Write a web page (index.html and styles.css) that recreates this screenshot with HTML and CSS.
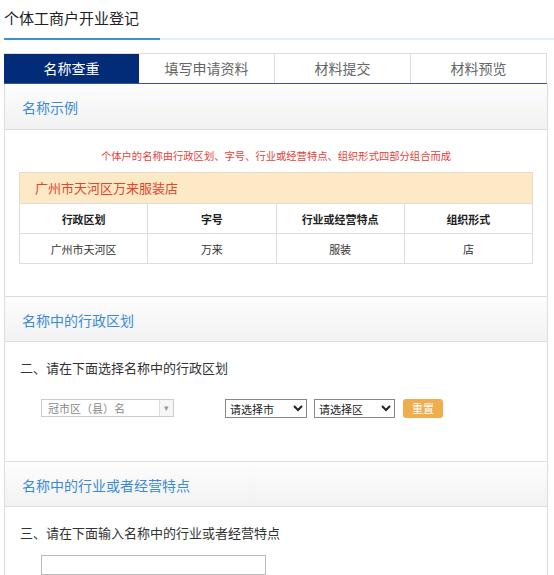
FILE: index.html
```html
<!DOCTYPE html>
<html lang="zh">
<head>
<meta charset="utf-8">
<title>个体工商户开业登记</title>
<link rel="stylesheet" href="styles.css">
</head>
<body>
<div class="page">
  <div class="title-bar">
    <h1 class="title">个体工商户开业登记</h1>
  </div>
  <div class="tabs">
    <div class="tab active">名称查重</div>
    <div class="tab">填写申请资料</div>
    <div class="tab">材料提交</div>
    <div class="tab">材料预览</div>
  </div>
  <div class="panel">
    <div class="sec-head">名称示例</div>
    <div class="sec-body example">
      <p class="note">个体户的名称由行政区划、字号、行业或经营特点、组织形式四部分组合而成</p>
      <div class="sample">广州市天河区万来服装店</div>
      <table class="tbl">
        <tr><th>行政区划</th><th>字号</th><th>行业或经营特点</th><th>组织形式</th></tr>
        <tr><td>广州市天河区</td><td>万来</td><td>服装</td><td>店</td></tr>
      </table>
    </div>
    <div class="sec-head bordered">名称中的行政区划</div>
    <div class="sec-body region">
      <p class="q">二、请在下面选择名称中的行政区划</p>
      <div class="controls">
        <div class="combo"><span class="combo-text">冠市区（县）名</span><span class="combo-arrow">▾</span></div>
        <select class="sel sel-city"><option>请选择市</option></select>
        <select class="sel sel-area"><option>请选择区</option></select>
        <button class="btn">重置</button>
      </div>
    </div>
    <div class="sec-head bordered">名称中的行业或者经营特点</div>
    <div class="sec-body industry">
      <p class="q">三、请在下面输入名称中的行业或者经营特点</p>
      <input class="txt" type="text">
    </div>
  </div>
</div>
</body>
</html>
```
FILE: styles.css
```css
* { box-sizing: border-box; }
html, body { margin: 0; padding: 0; background: #fff; }
body {
  font-family: "Microsoft YaHei", "Noto Sans CJK SC", "Liberation Sans", sans-serif;
  color: #333;
}
.page { padding: 0 0 0 4px; width: 554px; }
.title-bar {
  height: 40px;
  border-bottom: 2px solid #e6eef6;
}
.title {
  margin: 0;
  display: inline-block;
  font-size: 15px;
  font-weight: normal;
  line-height: 20px;
  padding-top: 8px;
  height: 40px;
  width: 156px;
  border-bottom: 2px solid #3d8fd8;
  color: #222;
}
.tabs {
  margin-top: 13px;
  display: flex;
  width: 543px;
  height: 31px;
  border-top: 1px solid #ddd;
  border-bottom: 1px solid #3a5596;
}
.tab {
  flex: 1;
  text-align: center;
  font-size: 14px;
  line-height: 29px;
  color: #666;
  border-right: 1px solid #ddd;
  background: #fff;
}
.tab.active {
  background: #022b78;
  color: #fff;
  border-right: none;
}
.panel {
  width: 544px;
  border-left: 1px solid #ddd;
  border-right: 1px solid #ddd;
}
.sec-head {
  height: 46px;
  line-height: 46px;
  padding-left: 17px;
  font-size: 14px;
  color: #3a8ad6;
  background: linear-gradient(#fdfdfd, #f2f2f2);
  border-bottom: 1px solid #ddd;
}
.sec-head.bordered { border-top: 1px solid #ddd; }
.sec-body { background: #fff; }
.example { padding: 19px 14px 32px 14px; }
.note {
  margin: 0 0 9px;
  text-align: center;
  font-size: 10.3px;
  line-height: 14px;
  color: #e5413a;
}
.sample {
  height: 31px;
  line-height: 30px;
  padding-left: 15px;
  background: #fde9c5;
  border: 1px solid #e6dcc8;
  border-bottom: none;
  font-size: 13px;
  color: #e0462e;
}
.tbl {
  width: 100%;
  border-collapse: collapse;
  table-layout: fixed;
  font-size: 11px;
  color: #333;
}
.tbl th, .tbl td {
  border: 1px solid #ddd;
  height: 30px;
  text-align: center;
  padding: 0;
}
.tbl th { font-weight: bold; color: #222; }
.region { padding: 17px 0 0 15px; height: 119px; }
.q { margin: 0; font-size: 13px; line-height: 18px; color: #333; }
.controls {
  margin-top: 21px;
  margin-left: 21px;
  display: flex;
  align-items: center;
  height: 20px;
}
.combo {
  width: 133px;
  height: 18px;
  border: 1px solid #ccc;
  display: flex;
  font-size: 11px;
  color: #888;
}
.combo-text { flex: 1; line-height: 16px; padding-left: 6px; }
.combo-arrow {
  width: 14px;
  border-left: 1px solid #ddd;
  font-size: 9px;
  line-height: 16px;
  text-align: center;
  color: #999;
  background: #f6f6f6;
}
.sel {
  height: 19px;
  font-family: inherit;
  font-size: 11px;
  border: 1px solid #888;
  border-radius: 0;
  background: #fff;
  color: #222;
  padding: 0;
}
.sel-city { width: 82px; margin-left: 51px; }
.sel-area { width: 81px; margin-left: 7px; }
.btn {
  margin-left: 8px;
  width: 40px;
  height: 19px;
  border: none;
  border-radius: 3px;
  background: #f0ad4e;
  color: #fff;
  font-family: inherit;
  font-size: 11px;
  padding: 0;
}
.industry { padding: 17px 0 0 15px; height: 70px; }
.txt {
  display: block;
  margin: 13px 0 0 21px;
  width: 225px;
  height: 20px;
  border: 1px solid #bbb;
}
```
